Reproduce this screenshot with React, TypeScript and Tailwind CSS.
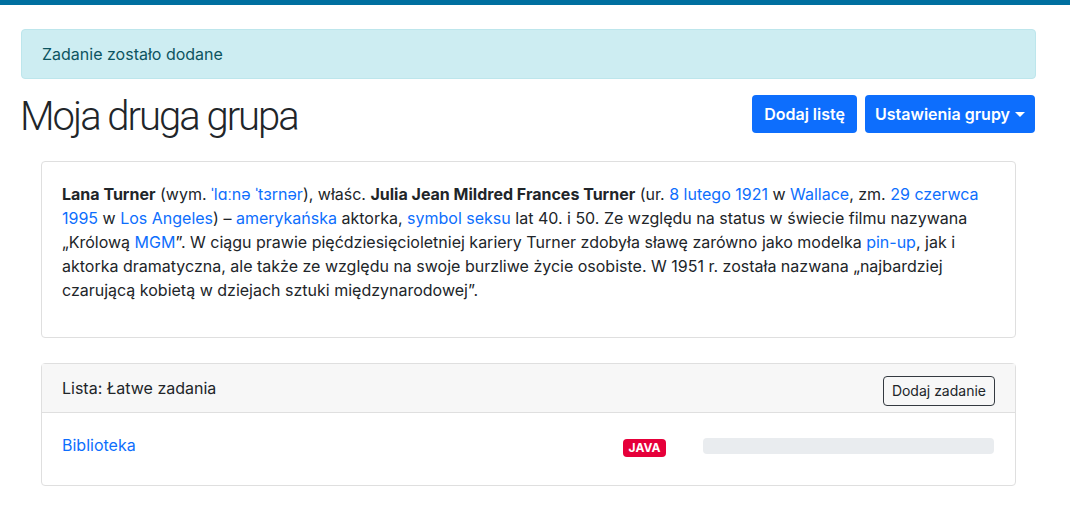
import React from "react";

const A = ({ children }: { children: React.ReactNode }) => (
  <a href="#" className="text-[#0d6efd] no-underline">
    {children}
  </a>
);

export default function App() {
  return (
    <div
      className="min-h-[524px] bg-white text-[#212529] text-base leading-6"
      style={{ fontFamily: "Inter, 'Noto Sans', 'Liberation Sans', sans-serif" }}
    >
      <div className="h-[5px] bg-[#0070a0]" />
      <div className="pl-[21px] pr-[34px] pt-[24px]">
        <div className="rounded-[4px] border border-[#bde6ec] bg-[#cdedf2] px-5 py-3 text-[#0c5460]">
          Zadanie zostało dodane
        </div>

        <div className="mt-[14px] flex items-start justify-between">
          <h1
            className="ml-[-1px] text-[40px] font-light leading-[48px] tracking-[-0.05em] text-[#212529]"
            style={{ fontFamily: "Roboto, Inter, sans-serif" }}
          >
            Moja druga grupa
          </h1>
          <div className="mt-[2px] flex gap-2">
            <button className="h-[38px] rounded-[4px] bg-[#0d6efd] px-3 font-semibold text-white">
              Dodaj listę
            </button>
            <button className="mr-[1px] flex h-[38px] items-center rounded-[4px] bg-[#0d6efd] px-[10px] font-semibold text-white">
              Ustawienia grupy
              <span className="ml-[5px] inline-block h-0 w-0 border-x-[5px] border-t-[5px] border-x-transparent border-t-white" />
            </button>
          </div>
        </div>

        <div className="mx-5 mt-5 rounded-[4px] border border-[#dfdfdf] p-5">
          <p className="mb-[15px]">
            <b className="font-bold">Lana Turner</b> (wym. <A>ˈlɑːnə ˈtɜrnər</A>), właśc.{" "}
            <b className="font-bold">Julia Jean Mildred Frances Turner</b> (ur. <A>8 lutego 1921</A> w{" "}
            <A>Wallace</A>, zm. <A>29 czerwca 1995</A> w <A>Los Angeles</A>) – <A>amerykańska</A>{" "}
            aktorka, <A>symbol seksu</A> lat 40. i 50. Ze względu na status w świecie filmu nazywana
            „Królową <A>MGM</A>”. W ciągu prawie pięćdziesięcioletniej kariery Turner zdobyła sławę
            zarówno jako modelka <A>pin-up</A>, jak i aktorka dramatyczna, ale także ze względu na
            swoje burzliwe życie osobiste. W 1951 r. została nazwana „najbardziej czarującą kobietą w
            dziejach sztuki międzynarodowej”.
          </p>
        </div>

        <div className="mx-5 mt-[25px] rounded-[4px] border border-[#dfdfdf]">
          <div className="flex h-[49px] items-start justify-between border-b border-[#dfdfdf] bg-[#f7f7f7] px-5 pt-3">
            <span>Lista: Łatwe zadania</span>
            <button className="h-[30px] rounded-[4px] border border-[#343a40] px-2 text-sm text-[#212529]">
              Dodaj zadanie
            </button>
          </div>
          <div className="grid grid-cols-[561px_80px_1fr] items-start px-5 pb-[28px] pt-[20px]">
            <A>Biblioteka</A>
            <span className="mt-[6px] inline-flex h-[18px] w-[43px] items-center justify-center rounded-[4px] bg-[#e6003a] text-[12px] font-bold leading-none text-white">
              JAVA
            </span>
            <div className="mt-[5px] h-4 w-[291px] rounded-[4px] bg-[#e9ecef]" />
          </div>
        </div>
      </div>
    </div>
  );
}
